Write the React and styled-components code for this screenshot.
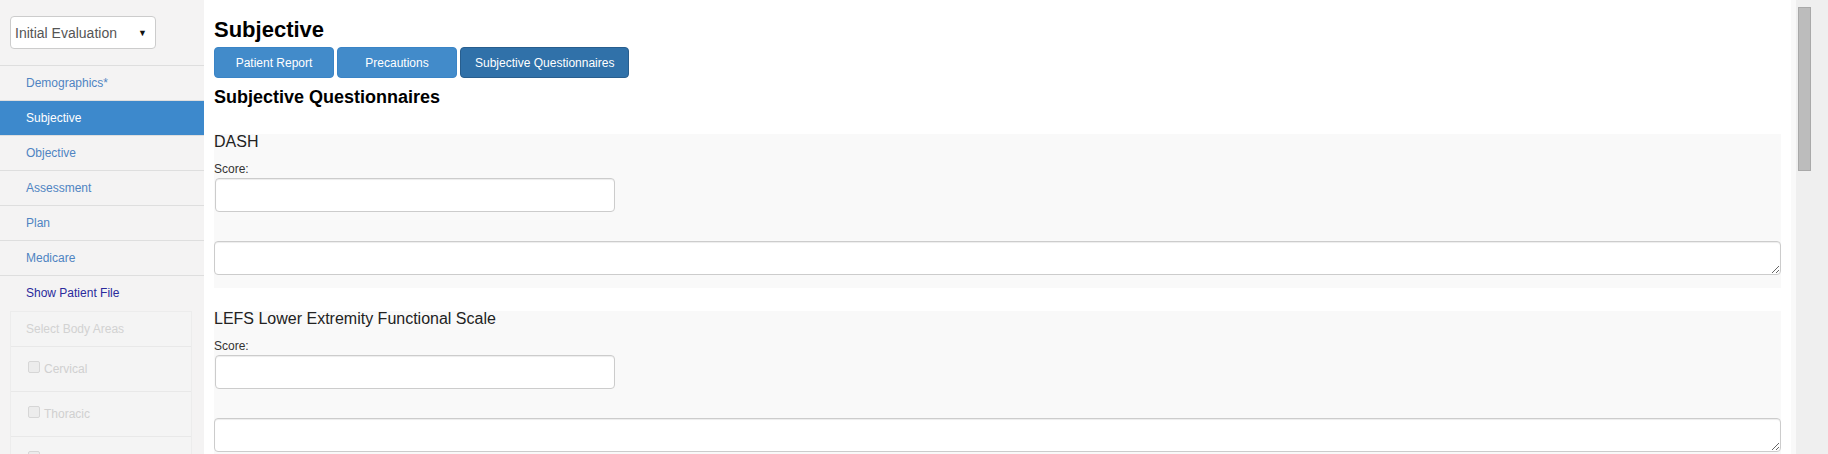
import React from 'react'
import styled, { createGlobalStyle } from 'styled-components'

const GlobalStyle = createGlobalStyle`
    html, body {
        margin: 0;
        padding: 0;
        height: 454px;
        overflow: hidden;
        background: #fff;
        font-family: "Liberation Sans", Arial, sans-serif;
        color: #333;
    }
`

const Page = styled.div`
    display: flex;
    height: 454px;
    overflow: hidden;
`

const Sidebar = styled.div`
    width: 204px;
    flex-shrink: 0;
    background: #f4f3f3;
    padding-top: 16px;
    box-sizing: border-box;
`

const SelectBox = styled.div`
    margin: 0 0 16px 10px;
    width: 146px;
    height: 33px;
    box-sizing: border-box;
    background: #fff;
    border: 1px solid #ccc;
    border-radius: 4px;
    display: flex;
    align-items: center;
    justify-content: space-between;
    padding: 0 8px 0 4px;
    font-size: 14px;
    color: #555;
`

const Caret = styled.span`
    font-size: 9px;
    color: #111;
`

const NavItem = styled.div`
    height: 34px;
    border-top: 1px solid #dedede;
    display: flex;
    align-items: center;
    padding-left: 26px;
    font-size: 12px;
    color: ${p => (p.$active ? '#fff' : p.$dark ? '#2a2a9c' : '#4f84c2')};
    background: ${p => (p.$active ? '#3d89cc' : 'transparent')};
`

const AreaPanel = styled.div`
    margin: 1px 12px 0 10px;
    border: 1px solid #ececec;
    background: #f4f4f4;
`

const AreaHeader = styled.div`
    height: 34px;
    display: flex;
    align-items: center;
    padding-left: 15px;
    font-size: 12px;
    color: #d2d2d2;
    border-bottom: 1px solid #e8e8e8;
`

const AreaRow = styled.div`
    height: 44px;
    display: flex;
    align-items: center;
    padding-left: 17px;
    font-size: 12px;
    color: #d0d0d0;
    border-bottom: 1px solid #e8e8e8;
`

const Check = styled.span`
    width: 10px;
    height: 10px;
    border: 1px solid #d6d6d6;
    border-radius: 2px;
    background: #ececec;
    margin: -4px 4px 0 0;
`

const Main = styled.div`
    flex: 1;
    padding: 18px 10px 0 10px;
    min-width: 0;
`

const Title = styled.h1`
    margin: 0;
    font-size: 22px;
    line-height: 24px;
    font-weight: bold;
    color: #000;
`

const Tabs = styled.div`
    display: flex;
    gap: 3px;
    margin-top: 5px;
`

const Tab = styled.button`
    height: 31px;
    min-width: 120px;
    padding: 0 14px;
    border-radius: 4px;
    font-family: inherit;
    font-size: 12px;
    color: #fff;
    border: 1px solid ${p => (p.$active ? '#285e8e' : '#3a84c6')};
    background: ${p => (p.$active ? '#3071a9' : '#428bca')};
`

const SubTitle = styled.h2`
    margin: 9px 0 29px;
    font-size: 18px;
    line-height: 20px;
    font-weight: bold;
    color: #000;
`

const Panel = styled.div`
    background: #f9f9f9;
    padding-bottom: 13px;
    margin-bottom: 25px;
`

const PanelTitle = styled.h3`
    margin: -2px 0 0;
    font-size: 16px;
    line-height: 16px;
    font-weight: normal;
    color: #222;
`

const Label = styled.div`
    margin-top: 11px;
    font-size: 12px;
    line-height: 17px;
    color: #333;
`

const Input = styled.input`
    display: block;
    width: 400px;
    height: 34px;
    box-sizing: border-box;
    margin-left: 1px;
    border: 1px solid #ccc;
    border-radius: 4px;
    background: #fff;
    box-shadow: inset 0 1px 1px rgba(0, 0, 0, 0.075);
`

const Notes = styled.textarea`
    display: block;
    width: 100%;
    height: 34px;
    box-sizing: border-box;
    margin-top: 29px;
    border: 1px solid #ccc;
    border-radius: 4px;
    background: #fff;
    box-shadow: inset 0 1px 1px rgba(0, 0, 0, 0.075);
`

const Gutter = styled.div`
    width: 30px;
    flex-shrink: 0;
    border-left: 5px solid #f9f9f9;
    background: #efefef;
    padding: 7px 0 0 2px;
    box-sizing: content-box;
`

const Thumb = styled.div`
    width: 11px;
    height: 162px;
    background: #bcbcbc;
    border: 1px solid #a9a9a9;
`

const navItems = ['Demographics*', 'Subjective', 'Objective', 'Assessment', 'Plan', 'Medicare']
const questionnaires = ['DASH', 'LEFS Lower Extremity Functional Scale']

const App = () => {
    return (
        <Page>
            <GlobalStyle />
            <Sidebar>
                <SelectBox>
                    <span>Initial Evaluation</span>
                    <Caret>▼</Caret>
                </SelectBox>
                {navItems.map(item => (
                    <NavItem key={item} $active={item === 'Subjective'}>{item}</NavItem>
                ))}
                <NavItem $dark>Show Patient File</NavItem>
                <AreaPanel>
                    <AreaHeader>Select Body Areas</AreaHeader>
                    <AreaRow><Check />Cervical</AreaRow>
                    <AreaRow><Check />Thoracic</AreaRow>
                    <AreaRow><Check />Lumbar</AreaRow>
                </AreaPanel>
            </Sidebar>
            <Main>
                <Title>Subjective</Title>
                <Tabs>
                    <Tab>Patient Report</Tab>
                    <Tab>Precautions</Tab>
                    <Tab $active>Subjective Questionnaires</Tab>
                </Tabs>
                <SubTitle>Subjective Questionnaires</SubTitle>
                {questionnaires.map(q => (
                    <Panel key={q}>
                        <PanelTitle>{q}</PanelTitle>
                        <Label>Score:</Label>
                        <Input type="text" />
                        <Notes />
                    </Panel>
                ))}
            </Main>
            <Gutter>
                <Thumb />
            </Gutter>
        </Page>
    )
}

export default App
